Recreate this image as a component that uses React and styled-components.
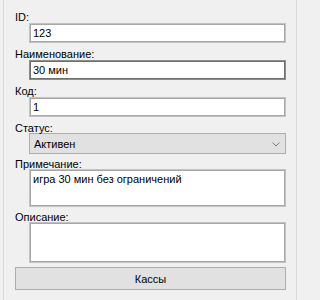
import React from 'react';
import styled, { createGlobalStyle } from 'styled-components';

const GlobalStyle = createGlobalStyle`
  html, body {
    margin: 0;
    padding: 0;
    background: #f0f0f0;
  }
  body {
    font-family: "Liberation Sans", Arial, sans-serif;
    font-size: 11px;
    color: #000;
  }
`;

const Panel = styled.div`
  box-sizing: border-box;
  width: 294px;
  height: 300px;
  margin-left: 3px;
  border-left: 1px solid #d9d9d9;
  border-right: 1px solid #d9d9d9;
  padding: 11px 10px 0 11px;
  display: flex;
  flex-direction: column;
`;

const Label = styled.div`
  line-height: 12px;
  height: 12px;
  margin-top: ${p => p.top || 0}px;
  margin-bottom: ${p => (p.overlap ? -1 : 0)}px;
  white-space: nowrap;
  position: relative;
  z-index: 1;
`;

const Indent = styled.div`
  margin-left: 14px;
`;

const TextBox = styled.div`
  box-sizing: border-box;
  height: ${p => p.h || 20}px;
  background: #fff;
  border: 1px solid ${p => (p.focused ? '#8c8c8c' : '#c2c2c2')};
  box-shadow: inset 0 0 0 1px ${p => (p.focused ? '#6f6f6f' : '#a8a8a8')};
  padding: ${p => (p.multi ? '3px 3px' : '0 3px')};
  line-height: ${p => (p.multi ? '12px' : '18px')};
  white-space: nowrap;
  overflow: hidden;
`;

const Combo = styled.div`
  box-sizing: border-box;
  height: 21px;
  background: #e1e1e1;
  border: 1px solid #adadad;
  display: flex;
  align-items: center;
  justify-content: space-between;
  padding: 0 5px 0 4px;
`;

const Chevron = styled.svg`
  width: 8px;
  height: 5px;
  margin-top: 1px;
`;

const Button = styled.div`
  box-sizing: border-box;
  height: 23px;
  margin-top: 4px;
  background: #e1e1e1;
  border: 1px solid #adadad;
  display: flex;
  align-items: center;
  justify-content: center;
`;

export default function App() {
  return (
    <>
      <GlobalStyle />
      <Panel>
        <Label>ID:</Label>
        <Indent>
          <TextBox>123</TextBox>
        </Indent>

        <Label top={5}>Наименование:</Label>
        <Indent>
          <TextBox focused>30 мин</TextBox>
        </Indent>

        <Label top={5}>Код:</Label>
        <Indent>
          <TextBox>1</TextBox>
        </Indent>

        <Label top={5} overlap>Статус:</Label>
        <Indent>
          <Combo>
            <span>Активен</span>
            <Chevron viewBox="0 0 8 5">
              <path d="M0.5 0.5 L4 4 L7.5 0.5" fill="none" stroke="#7a7a7a" strokeWidth="1" />
            </Chevron>
          </Combo>
        </Indent>

        <Label top={4} overlap>Примечание:</Label>
        <Indent>
          <TextBox multi h={38}>игра 30 мин без ограничений</TextBox>
        </Indent>

        <Label top={4} overlap>Описание:</Label>
        <Indent>
          <TextBox multi h={41}></TextBox>
        </Indent>

        <Button>Кассы</Button>
      </Panel>
    </>
  );
}
